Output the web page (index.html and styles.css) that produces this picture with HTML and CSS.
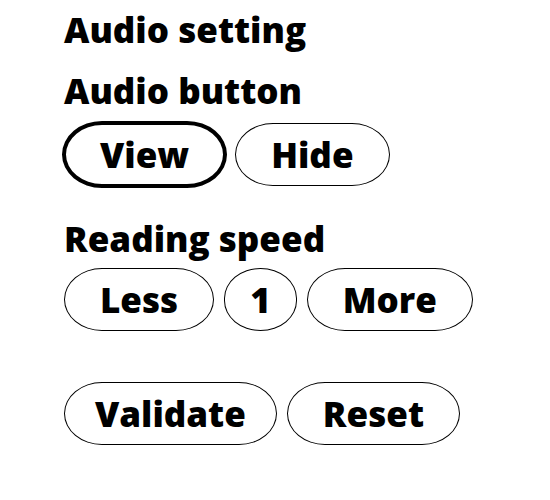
FILE: index.html
```html
<!DOCTYPE html>
<html lang="en">
<head>
<meta charset="utf-8">
<title>Audio setting</title>
<link rel="stylesheet" href="styles.css">
</head>
<body>
<main class="panel">
  <h1 class="title">Audio setting</h1>
  <section class="group">
    <h2 class="label">Audio button</h2>
    <div class="row row-first">
      <button class="pill pill-focus">View</button>
      <button class="pill">Hide</button>
    </div>
  </section>
  <section class="group">
    <h2 class="label">Reading speed</h2>
    <div class="row">
      <button class="pill">Less</button>
      <button class="pill pill-num">1</button>
      <button class="pill">More</button>
    </div>
  </section>
  <div class="row actions">
    <button class="pill pill-wide">Validate</button>
    <button class="pill">Reset</button>
  </div>
</main>
</body>
</html>
```
FILE: styles.css
```css
html, body {
  margin: 0;
  padding: 0;
  background: #fff;
}
body {
  font-family: "Open Sans", "Noto Sans", sans-serif;
  font-weight: 800;
  color: #000;
}
.panel {
  padding: 6px 0 0 64px;
  display: flex;
  flex-direction: column;
  align-items: flex-start;
}
.title, .label {
  margin: 0;
  font-size: 35px;
  font-weight: 800;
  line-height: 48px;
}
.title {
  margin-bottom: 13px;
}
.group {
  margin-bottom: 29px;
}
.row {
  display: flex;
  align-items: center;
  gap: 10px;
  margin-top: 5px;
}
.row-first {
  margin-top: 8px;
}
.pill {
  font-family: inherit;
  font-size: 35px;
  font-weight: 800;
  color: #000;
  background: #fff;
  border: 1px solid #000;
  border-radius: 38px / 31.5px;
  height: 63px;
  padding: 0 35px;
  line-height: 1;
  margin: 0;
}
.pill-focus {
  border-width: 4px;
  height: 67px;
  margin: -2px;
  padding: 0 34px;
  border-radius: 40px / 33.5px;
}
.pill-num {
  padding: 0 25px;
}
.pill-wide {
  padding: 0 30px;
}
.actions {
  margin-top: 22px;
}
```
